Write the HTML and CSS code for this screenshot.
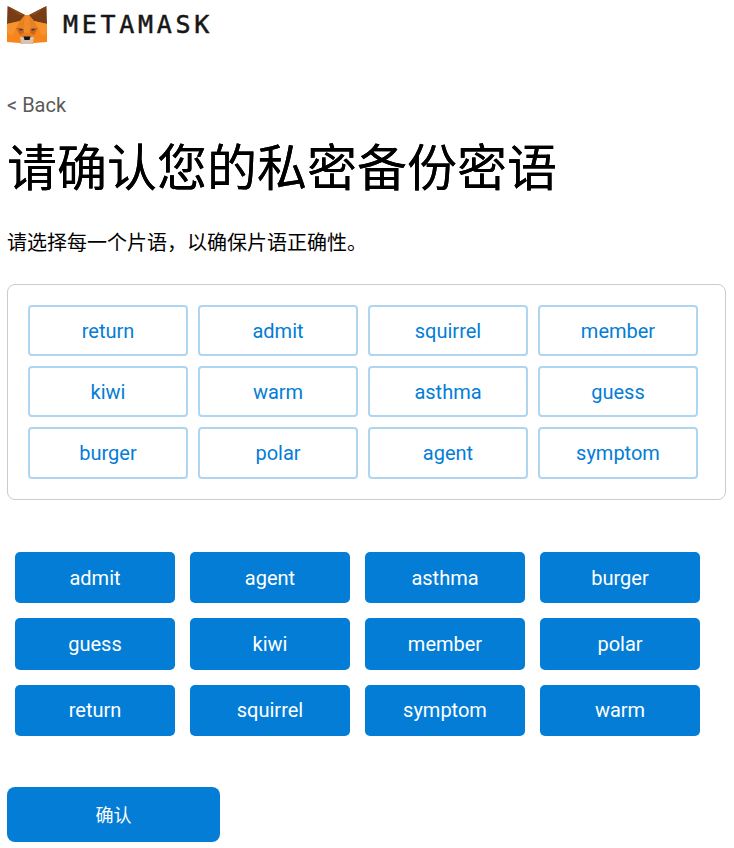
FILE: index.html
```html
<!DOCTYPE html>
<html lang="zh">
<head>
<meta charset="utf-8">
<title>MetaMask</title>
<link rel="stylesheet" href="styles.css">
</head>
<body>
<header class="brand">
  <svg class="fox" viewBox="0 0 40 38" width="40" height="38" aria-hidden="true">
    <polygon points="0,18 18,9 22,9 40,18 40,36 27,37 25,38 15,38 13,37 0,36" fill="#f6851b"/>
    <polygon points="0.5,0 18,9 13,15 0,18" fill="#763d16"/>
    <polygon points="39.5,0 22,9 27,15 40,18" fill="#763d16"/>
    <polygon points="0.5,0 18,9 12,9" fill="#8a4a1c"/>
    <polygon points="39.5,0 22,9 28,9" fill="#8a4a1c"/>
    <polygon points="18,9 22,9 24,26 16,26" fill="#f08a2b"/>
    <polygon points="13,15 18,9 16,26 9,22" fill="#e8811f"/>
    <polygon points="27,15 22,9 24,26 31,22" fill="#e8811f"/>
    <polygon points="0,18 13,15 9,22 5,30 0,27" fill="#f7932e"/>
    <polygon points="40,18 27,15 31,22 35,30 40,27" fill="#f7932e"/>
    <polygon points="9,22 17,23 17,27 13,29" fill="#c9651f"/>
    <polygon points="31,22 23,23 23,27 27,29" fill="#c9651f"/>
    <polygon points="11.5,22.5 16,23 14,25" fill="#3a3a40"/>
    <polygon points="28.5,22.5 24,23 26,25" fill="#3a3a40"/>
    <polygon points="13,29 17,27 23,27 27,29 25,31 15,31" fill="#e57d22"/>
    <polygon points="13,31 27,31 26,37 24,38 16,38 14,37" fill="#d8c3b4"/>
    <polygon points="16.5,30.5 23.5,30.5 22.5,34 17.5,34" fill="#161616"/>
  </svg>
  <span class="wordmark">METAMASK</span>
</header>
<a class="back" href="#">&lt; Back</a>
<h1 class="title">请确认您的私密备份密语</h1>
<p class="lead">请选择每一个片语，以确保片语正确性。</p>
<section class="picked">
  <div class="word">return</div>
  <div class="word">admit</div>
  <div class="word">squirrel</div>
  <div class="word">member</div>
  <div class="word">kiwi</div>
  <div class="word">warm</div>
  <div class="word">asthma</div>
  <div class="word">guess</div>
  <div class="word">burger</div>
  <div class="word">polar</div>
  <div class="word">agent</div>
  <div class="word">symptom</div>
</section>
<section class="pool">
  <div class="chip">admit</div>
  <div class="chip">agent</div>
  <div class="chip">asthma</div>
  <div class="chip">burger</div>
  <div class="chip">guess</div>
  <div class="chip">kiwi</div>
  <div class="chip">member</div>
  <div class="chip">polar</div>
  <div class="chip">return</div>
  <div class="chip">squirrel</div>
  <div class="chip">symptom</div>
  <div class="chip">warm</div>
</section>
<button class="confirm" type="button">确认</button>
</body>
</html>
```
FILE: styles.css
```css
* { box-sizing: border-box; }
html, body { margin: 0; padding: 0; }
body {
  width: 734px;
  height: 848px;
  overflow: hidden;
  padding: 5px 8px 0 7px;
  background: #fff;
  color: #000;
  font-family: Roboto, "Noto Sans CJK SC", sans-serif;
}
.brand { display: flex; align-items: center; height: 40px; }
.fox { display: block; flex: none; margin-right: 16px; }
.wordmark {
  font-family: "DejaVu Sans Mono", monospace;
  font-size: 25px;
  font-weight: 400;
  letter-spacing: 3.7px;
  color: #161616;
  -webkit-text-stroke: 0.5px #161616;
  position: relative;
  top: -1px;
}
.back {
  display: block;
  margin-top: 48px;
  font-size: 20px;
  line-height: 24px;
  color: #5a5a5a;
  text-decoration: none;
}
.title {
  margin: 18px 0 0;
  font-size: 50px;
  line-height: 68px;
  font-weight: 400;
  text-shadow: 0 0 0.6px #000;
}
.lead {
  margin: 26px 0 0;
  font-size: 20px;
  line-height: 28px;
}
.picked {
  display: grid;
  grid-template-columns: repeat(4, 160px);
  grid-auto-rows: 51.35px;
  column-gap: 10px;
  row-gap: 9.75px;
  width: 719px;
  height: 216px;
  margin-top: 27px;
  padding: 20px;
  border: 1px solid #ccc;
  border-radius: 8px;
}
.word {
  display: flex;
  align-items: center;
  justify-content: center;
  border: 2px solid #afd5f1;
  border-radius: 4px;
  font-size: 20px;
  color: #037dd6;
}
.pool {
  display: grid;
  grid-template-columns: repeat(4, 160px);
  grid-auto-rows: 51.3px;
  column-gap: 15px;
  row-gap: 15.1px;
  margin: 52px 0 0 8px;
}
.chip {
  display: flex;
  align-items: center;
  justify-content: center;
  border-radius: 5px;
  background: #037dd6;
  font-size: 20px;
  color: #fff;
}
.confirm {
  display: block;
  width: 213px;
  height: 55px;
  margin-top: 51px;
  padding: 0 0 2px;
  border: 0;
  border-radius: 8px;
  background: #037dd6;
  color: #fff;
  font-family: inherit;
  font-size: 18px;
}
```
